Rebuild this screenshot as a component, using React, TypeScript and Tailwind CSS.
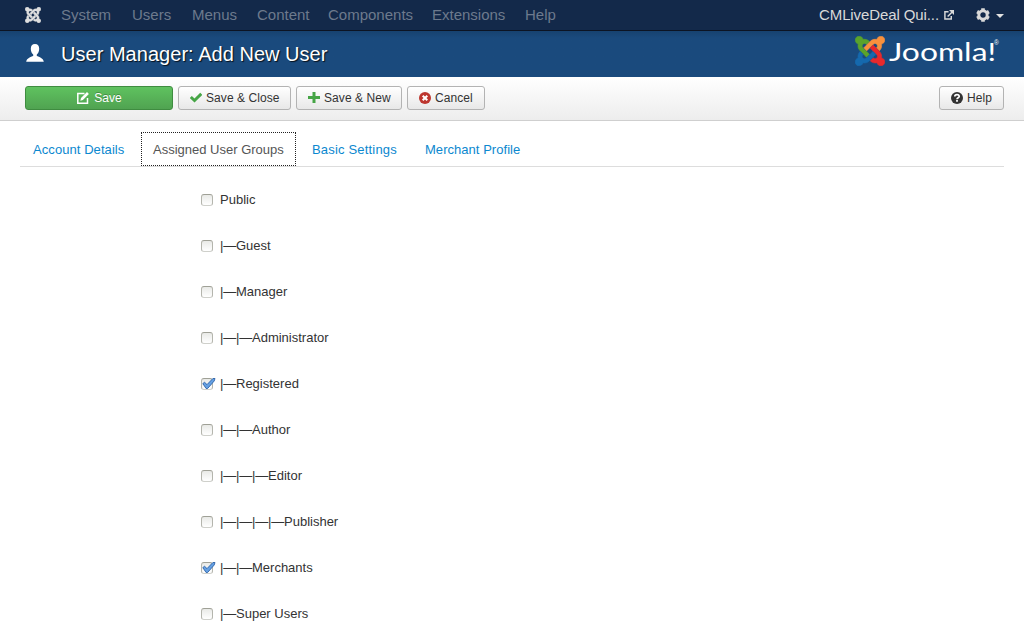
import type { ReactNode } from 'react';

const ARMS = [
  'M.6 92.1C.6 58.8 27.4 32 60.4 32c30 0 54.5 21.9 59.2 50.2 32.6-7.6 67.1.6 96.5 30l-44.3 44.3c-20.5-20.5-42.6-16.3-55.4-3.5-14.3 14.3-14.3 37.9 0 52.2l99.5 99.5-44 44.3c-87.7-87.2-49.7-49.7-99.8-99.7-26.8-26.5-35-64.8-24.8-98.9C20.4 144.6.6 120.7.6 92.1z',
  'M130.1 208.5l44.3 44.3c10-10 89.7-89.7 99.7-99.8 14.3-14.3 37.6-14.3 51.9 0 12.8 12.8 17 35-3.5 55.4l44 44.3c31.2-31.2 38.5-67.6 28.9-101.2 29.2-4.1 51.9-29.2 51.9-59.5 0-33.2-26.8-60.1-59.8-60.1-30.3 0-55.4 22.5-59.5 51.6-33.8-9.9-71.7-1.5-98.3 25.1-18.3 19.1-71.1 71.5-99.6 99.9z',
  'M396.4 360.7c8.2-32.7-.9-68.5-26.3-93.9-11.8-12.2 5 4.7-99.5-99.7l-44.3 44.3 99.7 99.7c14.3 14.3 14.3 37.6 0 51.9-12.8 12.8-35 17-55.4-3.5l-44 44.3c27.6 30.2 68 38.8 102.7 28 5.5 27.4 29.7 48.1 58.9 48.1 33 0 59.8-26.8 59.8-60.1 0-30.2-22.5-55-51.6-59.1z',
  'M312.1 307.6l-44-44.3c-87 86.4-50.4 50.4-99.7 99.8-14.3 14.3-37.6 14.3-51.9 0-13.1-13.4-16.9-35.3 3.2-55.4l-44-44.3c-30.2 30.2-38 65.2-29.5 98.3-26.7 6-46.2 29.9-46.2 58.2C0 453.2 26.8 480 59.8 480c28.6 0 52.5-19.8 58.6-46.7 32.7 8.2 68.5-.6 94.2-26 32.1-32 12.2-12.4 99.5-99.7z',
];

function JoomlaMark({ colors, className }: { colors: string[]; className: string }) {
  return (
    <svg viewBox="0 30 448 452" className={className}>
      {ARMS.map((d, i) => (
        <path key={i} d={d} fill={colors[i]} stroke={colors[i]} strokeWidth="9" />
      ))}
    </svg>
  );
}

const MENUS = [
  { label: 'System', w: 'w-[71px]' },
  { label: 'Users', w: 'w-[60px]' },
  { label: 'Menus', w: 'w-[65px]' },
  { label: 'Content', w: 'w-[71px]' },
  { label: 'Components', w: 'w-[104px]' },
  { label: 'Extensions', w: 'w-[93px]' },
  { label: 'Help', w: 'w-[60px]' },
];

const GROUPS = [
  { name: 'Public', level: 0 },
  { name: 'Guest', level: 1 },
  { name: 'Manager', level: 1 },
  { name: 'Administrator', level: 2 },
  { name: 'Registered', level: 1, checked: true },
  { name: 'Author', level: 2 },
  { name: 'Editor', level: 3 },
  { name: 'Publisher', level: 4 },
  { name: 'Merchants', level: 2, checked: true },
  { name: 'Super Users', level: 1 },
];

function ToolButton({ icon, label, className }: { icon: ReactNode; label: string; className: string }) {
  return (
    <button
      className={`flex h-6 shrink-0 items-center rounded-[3px] border border-[#b3b3b3] bg-linear-to-b from-white to-[#e8e8e8] pl-[11px] text-[12px] leading-[22px] text-[#333] ${className}`}
    >
      {icon}
      <span className="whitespace-nowrap tracking-[0.07px]">{label}</span>
    </button>
  );
}

function Checkbox({ checked }: { checked?: boolean }) {
  return (
    <span className="relative block h-3 w-3 shrink-0 rounded-[3px] border border-[#b4b5ad] border-t-[#9fa096] border-b-[#cfd0cb] bg-linear-to-b from-[#e9eae7] to-white">
      {checked && (
        <svg viewBox="0 0 15 13" className="absolute -left-px -top-[2px] h-[13px] w-[15px]">
          <path
            d="M1.8 6.6 3.6 5.300 6 7.600 11.900 1.500 14 1.500 13.200 4 6.600 11.500 5.100 11.500Z"
            fill="#65a0e2"
            stroke="#2c62a8"
            strokeWidth="0.9"
            strokeLinejoin="round"
          />
        </svg>
      )}
    </span>
  );
}

const TAB = 'h-full shrink-0 whitespace-nowrap text-[13px] leading-[35px] text-[#0b88cf]';

export default function App() {
  return (
    <div className="h-[638px] w-full overflow-hidden bg-white font-['Liberation_Sans',Arial,sans-serif] text-[13px] text-[#333]">
      <nav className="flex h-[31px] items-center border-b border-[#0c1423] bg-[#13294a] pl-[25px] text-[15px]">
        <JoomlaMark className="h-4 w-4 shrink-0" colors={['#dedede', '#dedede', '#dedede', '#dedede']} />
        <ul className="ml-5 flex leading-[30px] text-[#6d7a8d]">
          {MENUS.map((m) => (
            <li key={m.label} className={m.w}>
              {m.label}
            </li>
          ))}
        </ul>
        <div className="ml-auto flex items-center pr-5 text-[#d9d9d9]">
          <span className="w-[125px] whitespace-nowrap leading-[30px] tracking-[-0.1px]">CMLiveDeal Qui...</span>
          <svg viewBox="0 0 11 11" className="h-[10px] w-[10px]" fill="none" stroke="currentColor" strokeWidth="1.600">
            <path d="M5 2H1v8h7V6.500M4 7.200 9 2.200" />
            <path d="M5.500 0H11v5.500Z" fill="currentColor" stroke="none" />
          </svg>
          <svg viewBox="0.3 0.3 13.4 13.4" className="ml-[22px] h-[14px] w-[14px]">
            <g fill="currentColor">
              <path d="M5.300.5h3.400V4H5.300zM5.300 10h3.400v3.500H5.300z" />
              <path d="M5.300.5h3.400V4H5.300zM5.300 10h3.400v3.500H5.300z" transform="rotate(60 7 7)" />
              <path d="M5.300.5h3.400V4H5.300zM5.300 10h3.400v3.500H5.300z" transform="rotate(120 7 7)" />
            </g>
            <circle cx="7" cy="7" r="4" fill="#13294a" stroke="currentColor" strokeWidth="2.800" />
          </svg>
          <span className="ml-[6px] mt-[2px] h-0 w-0 border-x-[4.5px] border-t-[4.500px] border-x-transparent border-t-[#e2e2e2]" />
        </div>
      </nav>

      <header className="flex h-[46px] items-center bg-[#19497b] bg-linear-to-b from-[#17426f] via-[#1a4a7d] via-15% to-[#1a4a7d] pl-[26px]">
        <svg viewBox="0 0 18 18" className="mb-[2px] h-[18px] w-[18px] shrink-0" fill="#fff">
          <path d="M9 0C6.200 0 4.800 2 4.800 4.700c0 2.600 1 4.600 2.400 5.700v1.500C4.800 12.700.4 14.200.2 17.800h17.600c-.2-3.600-4.600-5.100-7-5.900v-1.500c1.400-1.100 2.400-3.100 2.400-5.700C13.200 2 11.800 0 9 0Z" />
        </svg>
        <h1 className="ml-[17px] whitespace-nowrap text-[20px] leading-[46px] tracking-[0.03px] text-white [text-shadow:1px_1px_1px_#000c]">
          User Manager: Add New User
        </h1>
        <div className="ml-auto flex h-full items-start pr-[24px] pt-[5px]">
          <JoomlaMark className="h-[30px] w-[30px]" colors={['#5aa32b', '#f9913c', '#e8292c', '#1569ae']} />
          <svg viewBox="0 0 115 34" className="h-[34px] w-[115px] overflow-visible" fill="#fff">
            <text x="4" y="25" fontFamily="Lato, sans-serif" fontSize="25" textLength="107" lengthAdjust="spacingAndGlyphs">
              Joomla!
            </text>
            <text x="109" y="9" fontFamily="Liberation Sans, sans-serif" fontSize="6.500">
              ®
            </text>
          </svg>
        </div>
      </header>

      <div className="flex h-11 items-start gap-[5px] border-b border-[#cfcfcf] bg-linear-to-b from-white to-[#ededed] pl-[25px] pr-5 pt-[9px]">
        <button className="flex h-6 w-[148px] items-center justify-center rounded-[3px] border border-[#3f8c40] bg-linear-to-b from-[#5fc25f] to-[#50a351] pl-px text-[12px] leading-[22px] text-white [text-shadow:0_-1px_0_#0004]">
          <svg viewBox="0 0 12 12" className="mr-[5px] h-3 w-3" fill="none" stroke="#fff" strokeWidth="1.500">
            <path d="M7.500 1.500H.8v9.700h9.700V6" />
            <path d="M3.300 8.800 4 6 10 .1l1.900 1.900-6 6Z" fill="#fff" stroke="none" />
          </svg>
          Save
        </button>
        <ToolButton
          className="w-[113px]"
          label="Save & Close"
          icon={
            <svg viewBox="0 0 12 12" className="mr-[4px] h-3 w-3">
              <path d="M.8 5 4.500 8.500 11.300 1.800" fill="none" stroke="#46a546" strokeWidth="3" />
            </svg>
          }
        />
        <ToolButton
          className="w-[106px]"
          label="Save & New"
          icon={
            <svg viewBox="0 0 12 12" className="mr-[4px] h-3 w-3">
              <path d="M6 0v11M0 5.500h12" fill="none" stroke="#46a546" strokeWidth="3" />
            </svg>
          }
        />
        <ToolButton
          className="w-[78px]"
          label="Cancel"
          icon={
            <svg viewBox="0 0 12 12" className="mb-px mr-[4px] h-3 w-3">
              <circle cx="6" cy="6" r="6" fill="#bd362f" />
              <path d="m3.700 3.700 4.600 4.600m0-4.600L3.700 8.300" stroke="#fff" strokeWidth="2" />
            </svg>
          }
        />
        <ToolButton
          className="ml-auto w-[65px]"
          label="Help"
          icon={
            <svg viewBox="0 0 12 12" className="mb-px mr-[4px] h-3 w-3">
              <circle cx="6" cy="6" r="6" fill="#333" />
              <path d="M3.800 4.600C3.800 2 8.200 2 8.200 4.400 8.200 5.800 6 5.600 6 7.200" fill="none" stroke="#fff" strokeWidth="1.700" />
              <path d="M5.100 8h1.800v1.700H5.100z" fill="#fff" />
            </svg>
          }
        />
      </div>

      <main className="px-5 pt-[11px]">
        <div className="flex h-[35px] border-b border-[#ddd]">
          <a className={`${TAB} w-[121px] pl-[13px] tracking-[0.07px]`}>Account Details</a>
          <a className="h-[34px] w-[155px] shrink-0 whitespace-nowrap border border-dotted border-[#222] bg-white pl-[11px] text-[13px] leading-[33px] text-[#555]">
            Assigned User Groups
          </a>
          <a className={`${TAB} w-[113px] pl-4 tracking-[0.18px]`}>Basic Settings</a>
          <a className={`${TAB} pl-4 tracking-[0.04px]`}>Merchant Profile</a>
        </div>
        <ul className="ml-[181px] mt-[10px]">
          {GROUPS.map((g) => (
            <li key={g.name} className="flex h-[46px] items-center">
              <Checkbox checked={g.checked} />
              <span className="ml-[7px] flex whitespace-nowrap">
                <span className="tracking-[-0.19px]">{'|—'.repeat(g.level)}</span>
                <span>{g.name}</span>
              </span>
            </li>
          ))}
        </ul>
      </main>
    </div>
  );
}
